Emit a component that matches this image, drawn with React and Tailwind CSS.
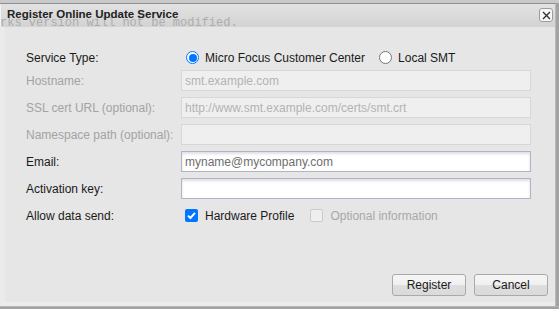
import React from "react";

const font = { fontFamily: '"Liberation Sans", Arial, sans-serif' };

function Row({ label, disabled, children }) {
  return (
    <div className="flex items-center h-[21px]">
      <div className={`w-[155px] text-[12px] leading-none ${disabled ? "text-[#a3a3a3]" : "text-[#1a1a1a]"}`}>{label}</div>
      {children}
    </div>
  );
}

function DisabledInput({ placeholder }) {
  return (
    <div className="w-[350px] h-[21px] border border-[#d7d7d7] bg-[#efefef] flex items-center px-[3px] text-[12px] text-[#b3b3b3]">
      {placeholder}
    </div>
  );
}

function EnabledInput({ value }) {
  return (
    <div className="w-[350px] h-[21px] border border-[#b3b3c8] bg-white shadow-[inset_0_2px_3px_rgba(0,0,0,0.13)] flex items-center px-[3px] text-[12px] text-[#6e6e6e]">
      {value}
    </div>
  );
}

function Radio({ checked }) {
  return checked ? (
    <span className="w-[13px] h-[13px] rounded-full border-[1.5px] border-[#0075ff] bg-white flex items-center justify-center">
      <span className="block w-[8px] h-[8px] rounded-full bg-[#0075ff]" />
    </span>
  ) : (
    <span className="block w-[13px] h-[13px] rounded-full border border-[#767676] bg-white" />
  );
}

function Button({ children }) {
  return (
    <div className="w-[74px] h-[22px] rounded-[3px] border border-[#a9a9a9] bg-[linear-gradient(#f6f6f6_0%,#f0f0f0_50%,#dedede_51%,#dadada_100%)] flex items-center justify-center text-[12px] text-[#1a1a1a]">
      {children}
    </div>
  );
}

export default function App() {
  return (
    <div className="w-[559px] h-[309px] bg-[#a3a3a3] overflow-hidden flex flex-col" style={font}>
      <div className="h-[3px] bg-[#c9c9c9] shrink-0" />
      <div className="w-[556px] h-[303px] border-t border-[#8e8e8e] border-r border-r-[#b9b9b9] bg-[#e6e6e6] flex flex-col shrink-0">
        {/* title bar */}
        <div className="relative h-[23px] bg-[linear-gradient(#e2e2e2,#d3d3d3)] border-l border-[#f2f2f2] flex items-center pl-[6px] pr-[2px] shrink-0 overflow-hidden">
          <div
            className="absolute left-[-1px] top-[13px] text-[12px] leading-none text-[#acacac] whitespace-nowrap"
            style={{ fontFamily: '"Liberation Mono", monospace' }}
          >
            rks version will not be modified.
          </div>
          <div className="relative text-[11.5px] font-bold text-[#222] leading-none mt-[-2px]">Register Online Update Service</div>
          <div className="relative ml-auto mt-[-1px] w-[14px] h-[14px] rounded-[3px] border border-[#9c9c9c] bg-[#f7f7f7] flex items-center justify-center">
            <svg width="9" height="9" viewBox="0 0 9 9">
              <path d="M1 1 L8 8 M8 1 L1 8" stroke="#333" strokeWidth="1.4" />
            </svg>
          </div>
        </div>
        {/* body */}
        <div className="flex-1 flex flex-col border-l-[5px] border-[#ebebeb] border-b-[4px] border-b-[#ececec]">
          <div className="pl-[21px] pt-[20px] flex flex-col">
            <Row label="Service Type:">
              <div className="flex items-center text-[12px] text-[#1a1a1a]">
                <span className="ml-[5px]"><Radio checked /></span>
                <span className="ml-[6px]">Micro Focus Customer Center</span>
                <span className="ml-[14px]"><Radio /></span>
                <span className="ml-[6px]">Local SMT</span>
              </div>
            </Row>
            <div className="mt-[2px] flex flex-col gap-[6px]">
              <Row label="Hostname:" disabled>
                <DisabledInput placeholder="smt.example.com" />
              </Row>
              <Row label="SSL cert URL (optional):" disabled>
                <DisabledInput placeholder="http://www.smt.example.com/certs/smt.crt" />
              </Row>
              <Row label="Namespace path (optional):" disabled>
                <DisabledInput placeholder="" />
              </Row>
              <Row label="Email:">
                <EnabledInput value="myname@mycompany.com" />
              </Row>
              <Row label="Activation key:">
                <EnabledInput value="" />
              </Row>
              <Row label="Allow data send:">
                <div className="flex items-center text-[12px]">
                  <span className="ml-[4px] w-[13px] h-[13px] rounded-[2px] bg-[#0075ff] flex items-center justify-center">
                    <svg width="11" height="11" viewBox="0 0 11 11">
                      <path d="M2 5.6 L4.4 8 L9 2.8" stroke="white" strokeWidth="1.9" fill="none" />
                    </svg>
                  </span>
                  <span className="ml-[7px] text-[#1a1a1a]">Hardware Profile</span>
                  <span className="ml-[16px] block w-[13px] h-[13px] rounded-[2px] border border-[#cbcbcb] bg-[#efefef]" />
                  <span className="ml-[7px] text-[#a8a8a8]">Optional information</span>
                </div>
              </Row>
            </div>
          </div>
          <div className="mt-auto flex justify-end gap-[8px] pr-[7px] pb-[6px]">
            <Button>Register</Button>
            <Button>Cancel</Button>
          </div>
        </div>
      </div>
      <div className="h-[1px] bg-[#b5b5b5] shrink-0" />
    </div>
  );
}
